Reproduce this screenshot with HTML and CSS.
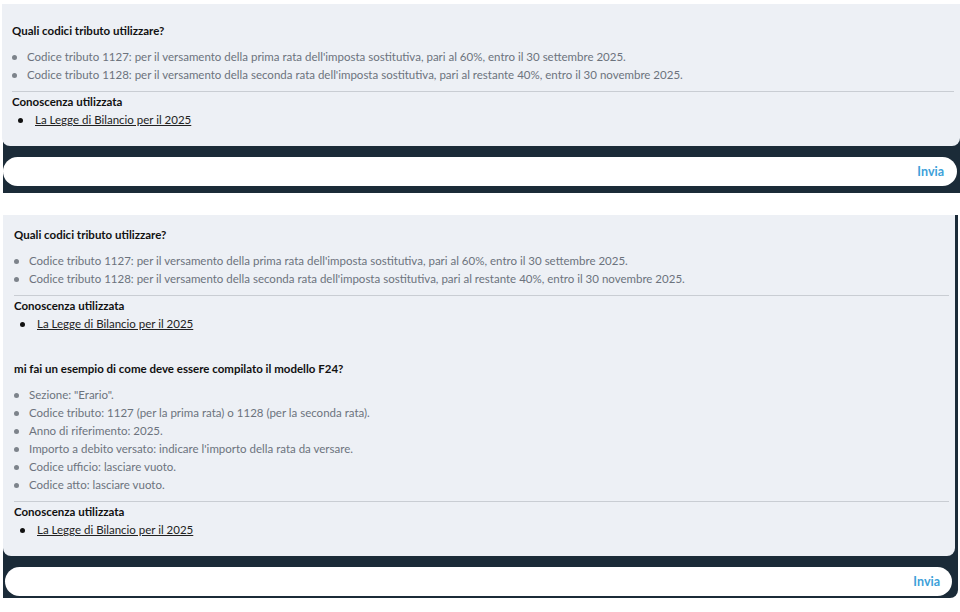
FILE: index.html
```html
<!DOCTYPE html>
<html lang="it">
<head>
  <meta charset="utf-8">
  <title>Assistente fiscale</title>
  <link rel="stylesheet" href="styles.css">
</head>
<body>
  <div class="chat chat-first">
    <div class="messages messages-first">
      <div class="msg">
        <h4 class="question">Quali codici tributo utilizzare?</h4>
        <ul class="answer">
          <li>Codice tributo 1127: per il versamento della prima rata dell'imposta sostitutiva, pari al 60%, entro il 30 settembre 2025.</li>
          <li>Codice tributo 1128: per il versamento della seconda rata dell'imposta sostitutiva, pari al restante 40%, entro il 30 novembre 2025.</li>
        </ul>
        <div class="sources">
          <div class="sources-title">Conoscenza utilizzata</div>
          <ul>
            <li><a href="#">La Legge di Bilancio per il 2025</a></li>
          </ul>
        </div>
      </div>
    </div>
    <div class="composer">
      <input type="text" class="composer-input" aria-label="Messaggio">
      <button class="send">Invia</button>
    </div>
  </div>

  <div class="chat chat-second">
    <div class="messages">
      <div class="msg">
        <h4 class="question">Quali codici tributo utilizzare?</h4>
        <ul class="answer">
          <li>Codice tributo 1127: per il versamento della prima rata dell'imposta sostitutiva, pari al 60%, entro il 30 settembre 2025.</li>
          <li>Codice tributo 1128: per il versamento della seconda rata dell'imposta sostitutiva, pari al restante 40%, entro il 30 novembre 2025.</li>
        </ul>
        <div class="sources">
          <div class="sources-title">Conoscenza utilizzata</div>
          <ul>
            <li><a href="#">La Legge di Bilancio per il 2025</a></li>
          </ul>
        </div>
      </div>
      <div class="msg">
        <h4 class="question">mi fai un esempio di come deve essere compilato il modello F24?</h4>
        <ul class="answer">
          <li>Sezione: "Erario".</li>
          <li>Codice tributo: 1127 (per la prima rata) o 1128 (per la seconda rata).</li>
          <li>Anno di riferimento: 2025.</li>
          <li>Importo a debito versato: indicare l'importo della rata da versare.</li>
          <li>Codice ufficio: lasciare vuoto.</li>
          <li>Codice atto: lasciare vuoto.</li>
        </ul>
        <div class="sources">
          <div class="sources-title">Conoscenza utilizzata</div>
          <ul>
            <li><a href="#">La Legge di Bilancio per il 2025</a></li>
          </ul>
        </div>
      </div>
    </div>
    <div class="composer">
      <input type="text" class="composer-input" aria-label="Messaggio">
      <button class="send">Invia</button>
    </div>
  </div>
</body>
</html>
```
FILE: styles.css
```css
body {
  margin: 0;
  background-color: #fff;
  font-family: Lato, "Open Sans", sans-serif;
  font-size: 11.5px;
  color: #1c1c1c;
}
.chat {
  background-color: #1b2b38;
  margin-left: 3px;
}
.chat-first {
  margin-top: 4px;
  width: 957px;
}
.chat-second {
  margin-top: 22px;
  width: 955px;
  border-bottom-right-radius: 8px;
}
.messages {
  background-color: #edf0f5;
  border-bottom-left-radius: 8px;
  border-bottom-right-radius: 8px;
  padding: 0 6px 1px 11px;
  width: 935px;
  margin-right: 3px;
}
.messages-first {
  margin-left: -1px;
  padding-left: 10px;
  padding-top: 7px;
  width: 942px;
}
.msg {
  padding: 11px 0 16px;
}
.question {
  margin: 0 0 8px;
  font-size: 11.5px;
  font-weight: 700;
  line-height: 18px;
  color: #111;
}
.answer {
  margin: 0;
  padding: 0 0 7px 0;
  border-bottom: 1px solid #c9cdd3;
  color: #6c737d;
  line-height: 18px;
  list-style: none;
}
.answer li::before {
  content: "";
  display: inline-block;
  width: 5px;
  height: 5px;
  border-radius: 50%;
  background-color: #7d838b;
  margin: 0 10px 2px 0;
  vertical-align: middle;
}
.sources {
  padding-top: 1px;
  line-height: 18px;
}
.sources-title {
  font-weight: 700;
  color: #111;
}
.sources ul {
  margin: 0;
  padding-left: 6px;
  list-style: none;
}
.sources li::before {
  content: "";
  display: inline-block;
  width: 5px;
  height: 5px;
  border-radius: 50%;
  background-color: #111;
  margin: 0 12px 2px 0;
  vertical-align: middle;
}
.sources a {
  color: #222;
  text-decoration: underline;
}
.composer {
  padding: 11px 3px 7px 0;
  display: flex;
}
.chat-second .composer {
  padding: 11px 6px 2px 2px;
}
.composer-input {
  flex: 1;
  height: 29px;
  box-sizing: border-box;
  border: none;
  border-radius: 15px 0 0 15px;
  background-color: #fff;
  padding: 0 12px;
  font: inherit;
  outline: none;
}
.send {
  height: 29px;
  border: none;
  background-color: #fff;
  border-radius: 0 15px 15px 0;
  color: #3d9fd9;
  font-family: inherit;
  font-size: 12.5px;
  font-weight: 700;
  padding: 0 13px 0 8px;
}
.chat-second .send {
  padding-right: 12px;
}
```
